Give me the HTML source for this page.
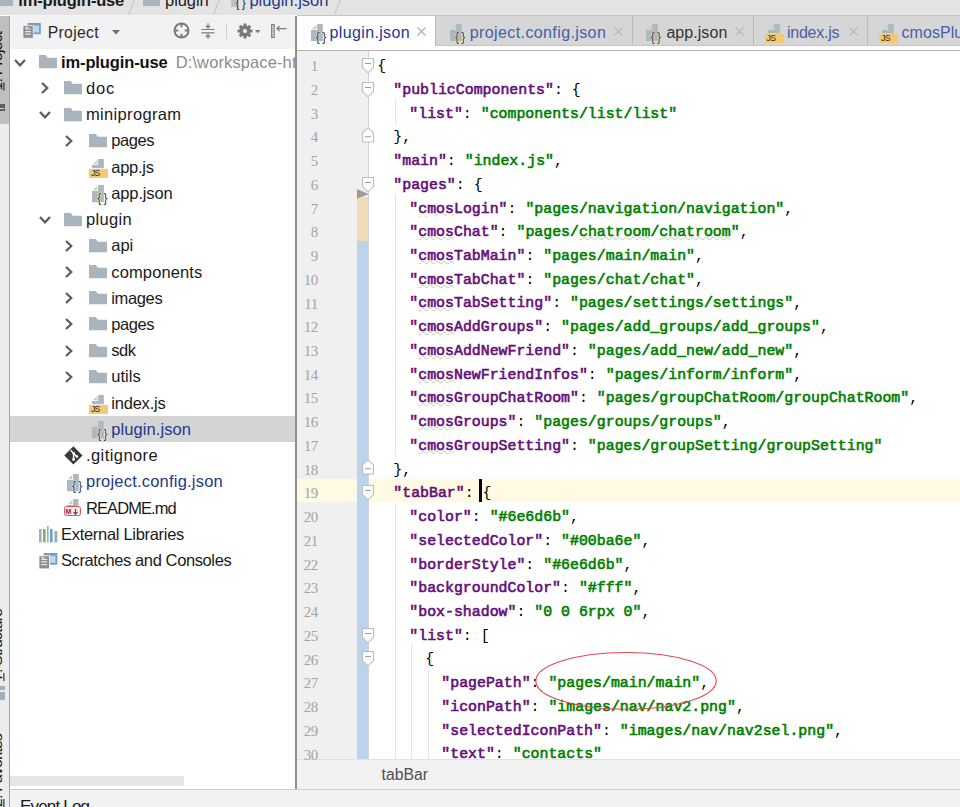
<!DOCTYPE html>
<html lang="en"><head><meta charset="utf-8"><title>plugin.json - im-plugin-use</title>
<style>
html,body{margin:0;padding:0}
body{width:960px;height:807px;overflow:hidden;position:relative;background:#fff;font-family:"Liberation Sans",sans-serif;color:#1a1a1a}
.a{position:absolute}
.t{position:absolute;white-space:pre;line-height:20px;height:20px}
svg{position:absolute;overflow:visible}
.ln{position:absolute;left:297px;width:20.8px;text-align:right;font-family:"Liberation Serif",serif;font-size:15px;color:#a3a3a3;height:24px;line-height:24px;letter-spacing:-0.5px}
.cl{position:absolute;left:377.3px;white-space:pre;font-family:"Liberation Mono",monospace;font-size:14.88px;height:24px;line-height:24px;color:#000}
.k{color:#660e7a;-webkit-text-stroke:0.6px #660e7a}
.s{color:#008000;-webkit-text-stroke:0.6px #008000}
.w{text-decoration:underline wavy #b4d2a5 1px;text-underline-offset:0.3px}
</style></head><body>

<div class="a" style="left:0;top:0;width:960px;height:15px;background:#e3e3e3"></div>
<div class="a" style="left:10px;top:15px;width:285px;height:1px;background:#f4f4f4"></div>
<div class="a" style="left:297px;top:15px;width:663px;height:1px;background:#c6c6c6"></div>
<div class="a" style="left:0;top:16px;width:9px;height:791px;background:#ececec"></div>
<div class="a" style="left:0;top:16px;width:9px;height:108px;background:#bfbfbf"></div>
<div class="a" style="left:9px;top:16px;width:1px;height:791px;background:#a4a4a4"></div>
<div class="a" style="left:10px;top:16px;width:285px;height:32.5px;background:#f2f2f2"></div>
<div class="a" style="left:10px;top:416px;width:285px;height:25.8px;background:#d4d4d4"></div>
<div class="a" style="left:10px;top:776.2px;width:174px;height:10.3px;background:#e6e6e6"></div>
<div class="a" style="left:295px;top:16px;width:2px;height:773px;background:#8f8f8f"></div>
<div class="a" style="left:297px;top:16px;width:663px;height:29.5px;background:#d6d6d6"></div>
<div class="a" style="left:297px;top:16px;width:137.5px;height:34px;background:#fff"></div>
<div class="a" style="left:434.5px;top:16px;width:1px;height:29.5px;background:#b9b9b9"></div>
<div class="a" style="left:632.3px;top:16px;width:1px;height:29.5px;background:#b9b9b9"></div>
<div class="a" style="left:753.2px;top:16px;width:1px;height:29.5px;background:#b9b9b9"></div>
<div class="a" style="left:867px;top:16px;width:1px;height:29.5px;background:#b9b9b9"></div>
<div class="a" style="left:434.5px;top:45px;width:526px;height:1px;background:#c4c4c4"></div>
<div class="a" style="left:297px;top:49.5px;width:663px;height:1px;background:#b4b4b4"></div>
<div class="a" style="left:297px;top:50.5px;width:71.5px;height:708.5px;background:#f0f0f0"></div>
<div class="a" style="left:297px;top:759px;width:663px;height:29.5px;background:#f2f2f2"></div>
<div class="a" style="left:297px;top:759px;width:663px;height:1px;background:#e2e2e2"></div>
<div class="a" style="left:10px;top:788.5px;width:950px;height:18.5px;background:#f2f2f2"></div>
<div class="a" style="left:10px;top:788.5px;width:950px;height:1px;background:#cdcdcd"></div><div class="a" style="left:297px;top:479.2px;width:663px;height:23.3px;background:#fffae3"></div>
<div class="a" style="left:368px;top:50.5px;width:1px;height:708.5px;background:#d4d4d4"></div>
<div class="a" style="left:356.7px;top:196.7px;width:11.8px;height:44.1px;background:#f0dcb4"></div>
<div class="a" style="left:356.7px;top:240.8px;width:11.8px;height:518.2px;background:#bcd3ec"></div>
<svg style="left:356.7px;top:188.5px" width="12" height="10" viewBox="0 0 12 10"><path d="M0 0 L11.8 5.2 L0 9.5Z" fill="#9a9a9a"/></svg>
<div class="a" style="left:395.2px;top:99.5px;width:1px;height:23.7px;background:#e4e4e4"></div>
<div class="a" style="left:395.2px;top:194.4px;width:1px;height:261.1px;background:#e4e4e4"></div>
<div class="a" style="left:395.2px;top:503.0px;width:1px;height:256.0px;background:#e4e4e4"></div>
<div class="a" style="left:411.4px;top:645.4px;width:1px;height:113.6px;background:#e4e4e4"></div>
<div class="a" style="left:427.6px;top:669.1px;width:1px;height:89.9px;background:#e4e4e4"></div>
<div class="ln" style="top:54.20px">1</div>
<div class="cl" style="top:54.10px;padding-left:0px">{</div>
<div class="ln" style="top:77.94px">2</div>
<div class="cl" style="top:77.84px;padding-left:16px"><span class="k">"publicComponents"</span>: {</div>
<div class="ln" style="top:101.67px">3</div>
<div class="cl" style="top:101.57px;padding-left:32px"><span class="k">"list"</span>: <span class="s">"components/list/list"</span></div>
<div class="ln" style="top:125.41px">4</div>
<div class="cl" style="top:125.31px;padding-left:16px">},</div>
<div class="ln" style="top:149.14px">5</div>
<div class="cl" style="top:149.04px;padding-left:16px"><span class="k">"main"</span>: <span class="s">"index.js"</span>,</div>
<div class="ln" style="top:172.88px">6</div>
<div class="cl" style="top:172.78px;padding-left:16px"><span class="k">"pages"</span>: {</div>
<div class="ln" style="top:196.61px">7</div>
<div class="cl" style="top:196.51px;padding-left:32px"><span class="k">"<span class="w">cmos</span>Login"</span>: <span class="s">"pages/navigation/navigation"</span>,</div>
<div class="ln" style="top:220.34px">8</div>
<div class="cl" style="top:220.24px;padding-left:32px"><span class="k">"<span class="w">cmos</span>Chat"</span>: <span class="s">"pages/<span class="w">chatroom</span>/<span class="w">chatroom</span>"</span>,</div>
<div class="ln" style="top:244.08px">9</div>
<div class="cl" style="top:243.98px;padding-left:32px"><span class="k">"<span class="w">cmos</span>TabMain"</span>: <span class="s">"pages/main/main"</span>,</div>
<div class="ln" style="top:267.81px">10</div>
<div class="cl" style="top:267.72px;padding-left:32px"><span class="k">"<span class="w">cmos</span>TabChat"</span>: <span class="s">"pages/chat/chat"</span>,</div>
<div class="ln" style="top:291.55px">11</div>
<div class="cl" style="top:291.45px;padding-left:32px"><span class="k">"<span class="w">cmos</span>TabSetting"</span>: <span class="s">"pages/settings/settings"</span>,</div>
<div class="ln" style="top:315.28px">12</div>
<div class="cl" style="top:315.19px;padding-left:32px"><span class="k">"<span class="w">cmos</span>AddGroups"</span>: <span class="s">"pages/add_groups/add_groups"</span>,</div>
<div class="ln" style="top:339.02px">13</div>
<div class="cl" style="top:338.92px;padding-left:32px"><span class="k">"<span class="w">cmos</span>AddNewFriend"</span>: <span class="s">"pages/add_new/add_new"</span>,</div>
<div class="ln" style="top:362.75px">14</div>
<div class="cl" style="top:362.66px;padding-left:32px"><span class="k">"<span class="w">cmos</span>NewFriendInfos"</span>: <span class="s">"pages/inform/inform"</span>,</div>
<div class="ln" style="top:386.49px">15</div>
<div class="cl" style="top:386.39px;padding-left:32px"><span class="k">"<span class="w">cmos</span>GroupChatRoom"</span>: <span class="s">"pages/groupChatRoom/groupChatRoom"</span>,</div>
<div class="ln" style="top:410.22px">16</div>
<div class="cl" style="top:410.12px;padding-left:32px"><span class="k">"<span class="w">cmos</span>Groups"</span>: <span class="s">"pages/groups/groups"</span>,</div>
<div class="ln" style="top:433.96px">17</div>
<div class="cl" style="top:433.86px;padding-left:32px"><span class="k">"<span class="w">cmos</span>GroupSetting"</span>: <span class="s">"pages/groupSetting/groupSetting"</span></div>
<div class="ln" style="top:457.69px">18</div>
<div class="cl" style="top:457.60px;padding-left:16px">},</div>
<div class="ln" style="top:481.43px">19</div>
<div class="cl" style="top:481.33px;padding-left:16px"><span class="k">"tabBar"</span>: {</div>
<div class="ln" style="top:505.16px">20</div>
<div class="cl" style="top:505.06px;padding-left:32px"><span class="k">"color"</span>: <span class="s">"#6e6d6b"</span>,</div>
<div class="ln" style="top:528.90px">21</div>
<div class="cl" style="top:528.80px;padding-left:32px"><span class="k">"selectedColor"</span>: <span class="s">"#00ba6e"</span>,</div>
<div class="ln" style="top:552.63px">22</div>
<div class="cl" style="top:552.53px;padding-left:32px"><span class="k">"borderStyle"</span>: <span class="s">"#6e6d6b"</span>,</div>
<div class="ln" style="top:576.37px">23</div>
<div class="cl" style="top:576.27px;padding-left:32px"><span class="k">"backgroundColor"</span>: <span class="s">"#fff"</span>,</div>
<div class="ln" style="top:600.11px">24</div>
<div class="cl" style="top:600.00px;padding-left:32px"><span class="k">"box-shadow"</span>: <span class="s">"0 0 6rpx 0"</span>,</div>
<div class="ln" style="top:623.84px">25</div>
<div class="cl" style="top:623.74px;padding-left:32px"><span class="k">"list"</span>: [</div>
<div class="ln" style="top:647.58px">26</div>
<div class="cl" style="top:647.48px;padding-left:48px">{</div>
<div class="ln" style="top:671.31px">27</div>
<div class="cl" style="top:671.21px;padding-left:64px"><span class="k">"pagePath"</span>: <span class="s">"pages/main/main"</span>,</div>
<div class="ln" style="top:695.05px">28</div>
<div class="cl" style="top:694.95px;padding-left:64px"><span class="k">"iconPath"</span>: <span class="s">"images/nav/nav2.png"</span>,</div>
<div class="ln" style="top:718.78px">29</div>
<div class="cl" style="top:718.68px;padding-left:64px"><span class="k">"selectedIconPath"</span>: <span class="s">"images/nav/nav2sel.png"</span>,</div>
<div class="ln" style="top:742.51px">30</div>
<div class="cl" style="top:742.41px;padding-left:64px"><span class="k">"text"</span>: <span class="s">"contacts"</span></div>
<div class="a" style="left:479.3px;top:479.2px;width:2.6px;height:22.6px;background:#000"></div>
<svg style="left:362.2px;top:57.9px" width="12" height="16" viewBox="0 0 11 16" preserveAspectRatio="none"><path d="M0.5 0.5 H10.5 V9.5 L5.5 14.8 L0.5 9.5Z" fill="#fff" stroke="#bdbdbd" stroke-width="1"/><path d="M2.8 5.5 H8.2" stroke="#9a9a9a" stroke-width="1"/></svg>
<svg style="left:362.2px;top:81.6px" width="12" height="16" viewBox="0 0 11 16" preserveAspectRatio="none"><path d="M0.5 0.5 H10.5 V9.5 L5.5 14.8 L0.5 9.5Z" fill="#fff" stroke="#bdbdbd" stroke-width="1"/><path d="M2.8 5.5 H8.2" stroke="#9a9a9a" stroke-width="1"/></svg>
<svg style="left:362.2px;top:176.6px" width="12" height="16" viewBox="0 0 11 16" preserveAspectRatio="none"><path d="M0.5 0.5 H10.5 V9.5 L5.5 14.8 L0.5 9.5Z" fill="#fff" stroke="#bdbdbd" stroke-width="1"/><path d="M2.8 5.5 H8.2" stroke="#9a9a9a" stroke-width="1"/></svg>
<svg style="left:362.2px;top:485.1px" width="12" height="16" viewBox="0 0 11 16" preserveAspectRatio="none"><path d="M0.5 0.5 H10.5 V9.5 L5.5 14.8 L0.5 9.5Z" fill="#fff" stroke="#bdbdbd" stroke-width="1"/><path d="M2.8 5.5 H8.2" stroke="#9a9a9a" stroke-width="1"/></svg>
<svg style="left:362.2px;top:627.5px" width="12" height="16" viewBox="0 0 11 16" preserveAspectRatio="none"><path d="M0.5 0.5 H10.5 V9.5 L5.5 14.8 L0.5 9.5Z" fill="#fff" stroke="#bdbdbd" stroke-width="1"/><path d="M2.8 5.5 H8.2" stroke="#9a9a9a" stroke-width="1"/></svg>
<svg style="left:362.2px;top:651.3px" width="12" height="16" viewBox="0 0 11 16" preserveAspectRatio="none"><path d="M0.5 0.5 H10.5 V9.5 L5.5 14.8 L0.5 9.5Z" fill="#fff" stroke="#bdbdbd" stroke-width="1"/><path d="M2.8 5.5 H8.2" stroke="#9a9a9a" stroke-width="1"/></svg>
<svg style="left:362.2px;top:126.7px" width="12" height="16" viewBox="0 0 11 16" preserveAspectRatio="none"><path d="M0.5 15 H10.5 V6 L5.5 0.7 L0.5 6Z" fill="#fff" stroke="#bdbdbd" stroke-width="1"/><path d="M2.8 9.8 H8.2" stroke="#9a9a9a" stroke-width="1"/></svg>
<svg style="left:362.2px;top:459.0px" width="12" height="16" viewBox="0 0 11 16" preserveAspectRatio="none"><path d="M0.5 15 H10.5 V6 L5.5 0.7 L0.5 6Z" fill="#fff" stroke="#bdbdbd" stroke-width="1"/><path d="M2.8 9.8 H8.2" stroke="#9a9a9a" stroke-width="1"/></svg>
<svg style="left:0;top:0" width="960" height="807" viewBox="0 0 960 807"><ellipse cx="626" cy="680.9" rx="90.2" ry="28.4" fill="none" stroke="#e2474c" stroke-width="1.1"/></svg><svg style="left:13.6px;top:58.8px" width="12" height="8" viewBox="0 0 12 8"><path d="M1 1 L6 6.3 L11 1" fill="none" stroke="#5c5c5c" stroke-width="2.2"/></svg>
<svg style="left:38.8px;top:55.1px" width="18.0" height="13.2" viewBox="0 0 18 13.2"><path d="M0 0 H6.8 L8.8 2.7 H18 V13.2 H0Z" fill="#aab4bc"/></svg>
<svg style="left:40.5px;top:82.2px" width="8" height="12" viewBox="0 0 8 12"><path d="M1 1 L6.3 6 L1 11" fill="none" stroke="#5c5c5c" stroke-width="2.2"/></svg>
<svg style="left:63.6px;top:81.3px" width="18.0" height="13.2" viewBox="0 0 18 13.2"><path d="M0 0 H6.8 L8.8 2.7 H18 V13.2 H0Z" fill="#aab4bc"/></svg>
<svg style="left:39.2px;top:111.3px" width="12" height="8" viewBox="0 0 12 8"><path d="M1 1 L6 6.3 L11 1" fill="none" stroke="#5c5c5c" stroke-width="2.2"/></svg>
<svg style="left:63.6px;top:107.6px" width="18.0" height="13.2" viewBox="0 0 18 13.2"><path d="M0 0 H6.8 L8.8 2.7 H18 V13.2 H0Z" fill="#aab4bc"/></svg>
<svg style="left:64.9px;top:134.7px" width="8" height="12" viewBox="0 0 8 12"><path d="M1 1 L6.3 6 L1 11" fill="none" stroke="#5c5c5c" stroke-width="2.2"/></svg>
<svg style="left:88.9px;top:133.8px" width="18.0" height="13.2" viewBox="0 0 18 13.2"><path d="M0 0 H6.8 L8.8 2.7 H18 V13.2 H0Z" fill="#aab4bc"/></svg>
<svg style="left:91.9px;top:158.6px" width="11.9" height="9.2" viewBox="0 0 11.9 9.2"><path d="M6.1 0 H11.9 V9.2 H0 V6.1 H6.1 Z" fill="#aeb8bf"/><path d="M5.3 0.7 V5.3 H0.7Z" fill="#c9d0d5"/></svg>
<div class="a" style="left:88.9px;top:168.8px;width:19.2px;height:8.9px;background:#f5c878"></div>
<div class="t" style="left:90.9px;top:168.5px;font-size:8.8px;color:#3d2e0e;line-height:9px;height:9px;letter-spacing:-0.7px;transform:scaleY(1.12);transform-origin:0 100%">JS</div>
<svg style="left:92.0px;top:185.2px" width="11.9" height="17.3" viewBox="0 0 11.9 17.3"><path d="M6.1 0 H11.9 V17.3 H0 V6.1 H6.1 Z" fill="#aeb8bf"/><path d="M5.3 0.7 V5.3 H0.7Z" fill="#c9d0d5"/></svg>
<div class="t" style="left:97.2px;top:191.6px;font-size:12px;color:#2f3336;line-height:12px;height:12px;letter-spacing:2.4px;text-shadow:0 0 1px #fff,0 0 1px #fff,0 0 2px #fff">{}</div>
<svg style="left:39.2px;top:216.2px" width="12" height="8" viewBox="0 0 12 8"><path d="M1 1 L6 6.3 L11 1" fill="none" stroke="#5c5c5c" stroke-width="2.2"/></svg>
<svg style="left:63.6px;top:212.5px" width="18.0" height="13.2" viewBox="0 0 18 13.2"><path d="M0 0 H6.8 L8.8 2.7 H18 V13.2 H0Z" fill="#aab4bc"/></svg>
<svg style="left:64.9px;top:239.6px" width="8" height="12" viewBox="0 0 8 12"><path d="M1 1 L6.3 6 L1 11" fill="none" stroke="#5c5c5c" stroke-width="2.2"/></svg>
<svg style="left:88.9px;top:238.7px" width="18.0" height="13.2" viewBox="0 0 18 13.2"><path d="M0 0 H6.8 L8.8 2.7 H18 V13.2 H0Z" fill="#aab4bc"/></svg>
<svg style="left:64.9px;top:265.8px" width="8" height="12" viewBox="0 0 8 12"><path d="M1 1 L6.3 6 L1 11" fill="none" stroke="#5c5c5c" stroke-width="2.2"/></svg>
<svg style="left:88.9px;top:264.9px" width="18.0" height="13.2" viewBox="0 0 18 13.2"><path d="M0 0 H6.8 L8.8 2.7 H18 V13.2 H0Z" fill="#aab4bc"/></svg>
<svg style="left:64.9px;top:292.1px" width="8" height="12" viewBox="0 0 8 12"><path d="M1 1 L6.3 6 L1 11" fill="none" stroke="#5c5c5c" stroke-width="2.2"/></svg>
<svg style="left:88.9px;top:291.2px" width="18.0" height="13.2" viewBox="0 0 18 13.2"><path d="M0 0 H6.8 L8.8 2.7 H18 V13.2 H0Z" fill="#aab4bc"/></svg>
<svg style="left:64.9px;top:318.3px" width="8" height="12" viewBox="0 0 8 12"><path d="M1 1 L6.3 6 L1 11" fill="none" stroke="#5c5c5c" stroke-width="2.2"/></svg>
<svg style="left:88.9px;top:317.4px" width="18.0" height="13.2" viewBox="0 0 18 13.2"><path d="M0 0 H6.8 L8.8 2.7 H18 V13.2 H0Z" fill="#aab4bc"/></svg>
<svg style="left:64.9px;top:344.5px" width="8" height="12" viewBox="0 0 8 12"><path d="M1 1 L6.3 6 L1 11" fill="none" stroke="#5c5c5c" stroke-width="2.2"/></svg>
<svg style="left:88.9px;top:343.6px" width="18.0" height="13.2" viewBox="0 0 18 13.2"><path d="M0 0 H6.8 L8.8 2.7 H18 V13.2 H0Z" fill="#aab4bc"/></svg>
<svg style="left:64.9px;top:370.8px" width="8" height="12" viewBox="0 0 8 12"><path d="M1 1 L6.3 6 L1 11" fill="none" stroke="#5c5c5c" stroke-width="2.2"/></svg>
<svg style="left:88.9px;top:369.9px" width="18.0" height="13.2" viewBox="0 0 18 13.2"><path d="M0 0 H6.8 L8.8 2.7 H18 V13.2 H0Z" fill="#aab4bc"/></svg>
<svg style="left:91.9px;top:394.7px" width="11.9" height="9.2" viewBox="0 0 11.9 9.2"><path d="M6.1 0 H11.9 V9.2 H0 V6.1 H6.1 Z" fill="#aeb8bf"/><path d="M5.3 0.7 V5.3 H0.7Z" fill="#c9d0d5"/></svg>
<div class="a" style="left:88.9px;top:404.9px;width:19.2px;height:8.9px;background:#f5c878"></div>
<div class="t" style="left:90.9px;top:404.6px;font-size:8.8px;color:#3d2e0e;line-height:9px;height:9px;letter-spacing:-0.7px;transform:scaleY(1.12);transform-origin:0 100%">JS</div>
<svg style="left:92.0px;top:421.2px" width="11.9" height="17.3" viewBox="0 0 11.9 17.3"><path d="M6.1 0 H11.9 V17.3 H0 V6.1 H6.1 Z" fill="#aeb8bf"/><path d="M5.3 0.7 V5.3 H0.7Z" fill="#c9d0d5"/></svg>
<div class="t" style="left:97.2px;top:427.6px;font-size:12px;color:#2f3336;line-height:12px;height:12px;letter-spacing:2.4px;text-shadow:0 0 1px #fff,0 0 1px #fff,0 0 2px #fff">{}</div>
<svg style="left:63.8px;top:446.1px" width="18.8" height="18.8" viewBox="0 0 20 20"><path d="M10 0.3 L19.7 10 L10 19.7 L0.3 10Z" fill="#3a3a3a"/><path d="M7 4.5 L10.2 7.7 M10.2 7.7 V14.5 M10.4 8 L13.6 11.2" stroke="#fff" stroke-width="1.5" fill="none"/><circle cx="10.2" cy="7.8" r="1.5" fill="#fff"/><circle cx="10.2" cy="14.4" r="1.5" fill="#fff"/><circle cx="13.7" cy="11.3" r="1.5" fill="#fff"/></svg>
<svg style="left:66.7px;top:473.7px" width="11.9" height="17.3" viewBox="0 0 11.9 17.3"><path d="M6.1 0 H11.9 V17.3 H0 V6.1 H6.1 Z" fill="#aeb8bf"/><path d="M5.3 0.7 V5.3 H0.7Z" fill="#c9d0d5"/></svg>
<div class="t" style="left:71.9px;top:480.1px;font-size:12px;color:#2f3336;line-height:12px;height:12px;letter-spacing:2.4px;text-shadow:0 0 1px #fff,0 0 1px #fff,0 0 2px #fff">{}</div>
<svg style="left:66.5px;top:498.9px" width="11.5" height="14.0" viewBox="0 0 11.5 14.0"><path d="M6.1 0 H11.5 V14.0 H0 V6.1 H6.1 Z" fill="#aeb8bf"/><path d="M5.3 0.7 V5.3 H0.7Z" fill="#c9d0d5"/></svg>
<div class="a" style="left:63.9px;top:506.3px;width:15px;height:8px;border:1.2px solid #e0525e;border-radius:2.5px;background:#fbe9ea"></div>
<div class="t" style="left:65.6px;top:507.3px;font-size:7px;font-weight:bold;color:#8a2730;line-height:9px;height:9px;letter-spacing:-0.3px">M</div>
<svg style="left:72.8px;top:508.8px" width="5" height="6" viewBox="0 0 5 6"><path d="M2.5 0 V5 M0.5 3 L2.5 5.2 L4.5 3" stroke="#8a2730" stroke-width="1.1" fill="none"/></svg>
<svg style="left:38.8px;top:526.3px" width="18.5" height="16.4" viewBox="0 0 18.5 16.4"><rect x="0" y="3" width="2.6" height="13.4" fill="#a3adb5"/><rect x="4" y="3" width="2.6" height="13.4" fill="#7fb069"/><rect x="8" y="0" width="1.6" height="16.4" fill="#a3adb5"/><rect x="11" y="3" width="2.6" height="13.4" fill="#6a9fd4"/><rect x="15.4" y="5" width="3" height="11.4" fill="#a3adb5"/></svg>
<svg style="left:38.8px;top:552.8px" width="18.3" height="15.9" viewBox="0 0 17.8 15.2" preserveAspectRatio="none"><rect x="4.6" y="0" width="13.2" height="11.2" fill="#6f9fc3"/><rect x="6.3" y="2.6" width="9.8" height="6.9" fill="#bcd6ea"/><rect x="0" y="2.7" width="10.2" height="12.5" fill="#8c8c8c" stroke="#fff" stroke-width="0.8"/><path d="M2.2 6 H8 M2.2 8.6 H8 M2.2 11.2 H8" stroke="#e8e8e8" stroke-width="1.2"/><rect x="2.2" y="4" width="3" height="1.2" fill="#e8e8e8"/></svg>
<svg style="left:23px;top:23.4px" width="17.8" height="15.2" viewBox="0 0 17.8 15.2"><rect x="4.6" y="0" width="13.2" height="11.2" fill="#6f9fc3"/><rect x="6.3" y="2.6" width="9.8" height="6.9" fill="#bcd6ea"/><rect x="0" y="2.7" width="10.2" height="12.5" fill="#8c8c8c" stroke="#f2f2f2" stroke-width="0.8"/><path d="M2.2 6 H8 M2.2 8.6 H8 M2.2 11.2 H8" stroke="#e8e8e8" stroke-width="1.2"/><rect x="2.2" y="4" width="3" height="1.2" fill="#e8e8e8"/></svg>
<svg style="left:111.5px;top:30.3px" width="8" height="5" viewBox="0 0 8 5"><path d="M0 0 H8 L4 4.6Z" fill="#6e6e6e"/></svg>
<svg style="left:172.5px;top:21.8px" width="17" height="17" viewBox="0 0 17 17"><circle cx="8.5" cy="8.5" r="7" fill="none" stroke="#7a7a7a" stroke-width="2"/><path d="M8.5 1.5 V5.3 M8.5 11.7 V15.5 M1.5 8.5 H5.3 M11.7 8.5 H15.5" stroke="#7a7a7a" stroke-width="2"/></svg>
<svg style="left:200.5px;top:22.5px" width="14" height="16" viewBox="0 0 14 16"><path d="M0.4 6.5 H13.4 M0.4 9.9 H13.4" stroke="#7a7a7a" stroke-width="1.1"/><path d="M7 0.3 V4.6 M4.8 2.6 L7 4.8 L9.2 2.6 M7 16 V11.8 M4.8 13.8 L7 11.6 L9.2 13.8" stroke="#7a7a7a" stroke-width="1.2" fill="none"/></svg>
<div class="a" style="left:226.2px;top:23.5px;width:1px;height:15.5px;background:#cdcdcd"></div>
<svg style="left:236.5px;top:23px" width="16" height="16" viewBox="0 0 16 16"><path d="M13.19 6.51 L15.45 6.49 L15.45 9.51 L13.19 9.49 L12.72 10.61 L14.33 12.20 L12.20 14.33 L10.61 12.72 L9.49 13.19 L9.51 15.45 L6.49 15.45 L6.51 13.19 L5.39 12.72 L3.80 14.33 L1.67 12.20 L3.28 10.61 L2.81 9.49 L0.55 9.51 L0.55 6.49 L2.81 6.51 L3.28 5.39 L1.67 3.80 L3.80 1.67 L5.39 3.28 L6.51 2.81 L6.49 0.55 L9.51 0.55 L9.49 2.81 L10.61 3.28 L12.20 1.67 L14.33 3.80 L12.72 5.39Z" fill="#7a7a7a"/><circle cx="8" cy="8" r="5.6" fill="#7a7a7a"/><circle cx="8" cy="8" r="2.1" fill="#f2f2f2"/></svg>
<svg style="left:255.3px;top:30.3px" width="5.4" height="3.4" viewBox="0 0 5.4 3.4"><path d="M0 0 H5.4 L2.7 3.2Z" fill="#7a7a7a"/></svg>
<svg style="left:271px;top:24px" width="16" height="14" viewBox="0 0 16 14"><rect x="0.6" y="0.5" width="2.6" height="13" fill="#c9c9c9" stroke="#7a7a7a" stroke-width="1"/><path d="M6 4.6 H15.5 M8.6 2 L6 4.6 L8.6 7.2" stroke="#7a7a7a" stroke-width="1.2" fill="none"/></svg>
<div class="a" style="left:0;top:0;width:12.5px;height:5.5px;background:#aab4bc"></div>
<div class="a" style="left:142.5px;top:0;width:17.5px;height:5.5px;background:#aab4bc"></div>
<svg style="left:127.5px;top:0" width="7" height="15" viewBox="0 0 7 15"><path d="M6.2 0 L0.5 14.5" stroke="#c2c2c2" stroke-width="1"/></svg>
<svg style="left:213.0px;top:0" width="7" height="15" viewBox="0 0 7 15"><path d="M6.2 0 L0.5 14.5" stroke="#c2c2c2" stroke-width="1"/></svg>
<svg style="left:333.5px;top:0" width="7" height="15" viewBox="0 0 7 15"><path d="M6.2 0 L0.5 14.5" stroke="#c2c2c2" stroke-width="1"/></svg>
<div class="a" style="left:230.5px;top:0;width:8.5px;height:7px;background:#b8c1c8"></div>
<div class="t" style="left:235.4px;top:-3.2px;font-size:12px;color:#2f3336;line-height:12px;height:12px;letter-spacing:2.4px;text-shadow:0 0 1px #e3e3e3,0 0 1px #e3e3e3">{}</div>
<svg style="left:311.2px;top:24.0px" width="11.8" height="17.0" viewBox="0 0 11.8 17.0"><path d="M6.1 0 H11.8 V17.0 H0 V6.1 H6.1 Z" fill="#aeb8bf"/><path d="M5.3 0.7 V5.3 H0.7Z" fill="#c9d0d5"/></svg>
<div class="t" style="left:315.8px;top:30.6px;font-size:12px;color:#2f3336;line-height:12px;height:12px;letter-spacing:2.4px;text-shadow:0 0 1px #fff,0 0 1px #fff">{}</div>
<svg style="left:450.3px;top:24.0px" width="11.8" height="17.0" viewBox="0 0 11.8 17.0"><path d="M6.1 0 H11.8 V17.0 H0 V6.1 H6.1 Z" fill="#aeb8bf"/><path d="M5.3 0.7 V5.3 H0.7Z" fill="#c9d0d5"/></svg>
<div class="t" style="left:454.9px;top:30.6px;font-size:12px;color:#2f3336;line-height:12px;height:12px;letter-spacing:2.4px;text-shadow:0 0 1px #fff,0 0 1px #fff">{}</div>
<svg style="left:646.1px;top:24.0px" width="11.8" height="17.0" viewBox="0 0 11.8 17.0"><path d="M6.1 0 H11.8 V17.0 H0 V6.1 H6.1 Z" fill="#aeb8bf"/><path d="M5.3 0.7 V5.3 H0.7Z" fill="#c9d0d5"/></svg>
<div class="t" style="left:650.7px;top:30.6px;font-size:12px;color:#2f3336;line-height:12px;height:12px;letter-spacing:2.4px;text-shadow:0 0 1px #fff,0 0 1px #fff">{}</div>
<svg style="left:767.5px;top:24.1px" width="11.9" height="9.2" viewBox="0 0 11.9 9.2"><path d="M6.1 0 H11.9 V9.2 H0 V6.1 H6.1 Z" fill="#aeb8bf"/><path d="M5.3 0.7 V5.3 H0.7Z" fill="#c9d0d5"/></svg>
<div class="a" style="left:764.5px;top:34.3px;width:19.2px;height:8.9px;background:#f5c878"></div>
<div class="t" style="left:766.5px;top:34.0px;font-size:8.8px;color:#3d2e0e;line-height:9px;height:9px;letter-spacing:-0.7px;transform:scaleY(1.12);transform-origin:0 100%">JS</div>
<svg style="left:882.0px;top:24.1px" width="11.9" height="9.2" viewBox="0 0 11.9 9.2"><path d="M6.1 0 H11.9 V9.2 H0 V6.1 H6.1 Z" fill="#aeb8bf"/><path d="M5.3 0.7 V5.3 H0.7Z" fill="#c9d0d5"/></svg>
<div class="a" style="left:879.0px;top:34.3px;width:19.2px;height:8.9px;background:#f5c878"></div>
<div class="t" style="left:881.0px;top:34.0px;font-size:8.8px;color:#3d2e0e;line-height:9px;height:9px;letter-spacing:-0.7px;transform:scaleY(1.12);transform-origin:0 100%">JS</div>
<svg style="left:416.9px;top:27.1px" width="9" height="9" viewBox="0 0 9 9"><path d="M0.5 0.5 L8.5 8.5 M8.5 0.5 L0.5 8.5" stroke="#b0b0b0" stroke-width="1.2"/></svg>
<svg style="left:613.5px;top:27.1px" width="9" height="9" viewBox="0 0 9 9"><path d="M0.5 0.5 L8.5 8.5 M8.5 0.5 L0.5 8.5" stroke="#b8b8b8" stroke-width="1.2"/></svg>
<svg style="left:734.5px;top:27.1px" width="9" height="9" viewBox="0 0 9 9"><path d="M0.5 0.5 L8.5 8.5 M8.5 0.5 L0.5 8.5" stroke="#b8b8b8" stroke-width="1.2"/></svg>
<svg style="left:848.5px;top:27.1px" width="9" height="9" viewBox="0 0 9 9"><path d="M0.5 0.5 L8.5 8.5 M8.5 0.5 L0.5 8.5" stroke="#b8b8b8" stroke-width="1.2"/></svg>
<div class="t" style="left:0;top:0;transform-origin:0 0;transform:translate(-12.6px,90.5px) rotate(-90deg);font-size:15.5px;letter-spacing:-0.65px;color:#111;text-underline-offset:1px"><u>1</u>: Project</div>
<div class="a" style="left:0;top:104px;width:5px;height:7px;background:#5f5f5f"></div>
<div class="a" style="left:0;top:107.6px;width:4px;height:1.4px;background:#d0d0d0"></div>
<div class="t" style="left:0;top:0;transform-origin:0 0;transform:translate(-12.6px,681.0px) rotate(-90deg);font-size:15.5px;letter-spacing:-0.65px;color:#111;text-underline-offset:1px"><u>7</u>: Structure</div>
<div class="a" style="left:0;top:685.5px;width:5px;height:14.5px;background:#9fb0c2"></div>
<div class="a" style="left:0;top:690px;width:5px;height:2px;background:#ececec"></div>
<div class="t" style="left:0;top:0;transform-origin:0 0;transform:translate(-12.6px,807.0px) rotate(-90deg);font-size:15.5px;letter-spacing:-0.65px;color:#111;text-underline-offset:1px"><u>2</u>: Favorites</div>
<div class="t" style="left:18.3px;top:-9.82px;font-size:16.5px;letter-spacing:-0.181px;color:#1a1a1a;font-weight:bold;">im-plugin-use</div>
<div class="t" style="left:165.0px;top:-9.82px;font-size:16.5px;letter-spacing:-0.049px;color:#1a1a1a;">plugin</div>
<div class="t" style="left:249.4px;top:-9.82px;font-size:16.5px;letter-spacing:0.021px;color:#22388f;">plugin.json</div>
<div class="t" style="left:47.7px;top:22.73px;font-size:15.8px;letter-spacing:0.305px;color:#2b2b2b;">Project</div>
<div class="t" style="left:61.0px;top:51.68px;font-size:16.5px;letter-spacing:-0.123px;color:#111;font-weight:bold;">im-plugin-use</div>
<div class="t" style="left:86.0px;top:77.91px;font-size:16.5px;letter-spacing:0.845px;color:#1a1a1a;">doc</div>
<div class="t" style="left:86.0px;top:104.14px;font-size:16.5px;letter-spacing:0.330px;color:#1a1a1a;">miniprogram</div>
<div class="t" style="left:111.3px;top:130.37px;font-size:16.5px;letter-spacing:-0.417px;color:#1a1a1a;">pages</div>
<div class="t" style="left:111.3px;top:156.60px;font-size:16.5px;letter-spacing:-0.266px;color:#1a1a1a;">app.js</div>
<div class="t" style="left:111.3px;top:182.83px;font-size:16.5px;letter-spacing:-0.142px;color:#1a1a1a;">app.json</div>
<div class="t" style="left:86.0px;top:209.06px;font-size:16.5px;letter-spacing:0.331px;color:#1a1a1a;">plugin</div>
<div class="t" style="left:111.3px;top:235.29px;font-size:16.5px;letter-spacing:-0.016px;color:#1a1a1a;">api</div>
<div class="t" style="left:111.3px;top:261.52px;font-size:16.5px;letter-spacing:0.123px;color:#1a1a1a;">components</div>
<div class="t" style="left:111.3px;top:287.75px;font-size:16.5px;letter-spacing:-0.361px;color:#1a1a1a;">images</div>
<div class="t" style="left:111.3px;top:313.98px;font-size:16.5px;letter-spacing:-0.417px;color:#1a1a1a;">pages</div>
<div class="t" style="left:111.3px;top:340.21px;font-size:16.5px;letter-spacing:-0.494px;color:#1a1a1a;">sdk</div>
<div class="t" style="left:111.3px;top:366.44px;font-size:16.5px;letter-spacing:0.014px;color:#1a1a1a;">utils</div>
<div class="t" style="left:111.3px;top:392.67px;font-size:16.5px;letter-spacing:-0.222px;color:#1a1a1a;">index.js</div>
<div class="t" style="left:111.3px;top:418.90px;font-size:16.5px;letter-spacing:0.081px;color:#22388f;">plugin.json</div>
<div class="t" style="left:86.0px;top:445.13px;font-size:16.5px;letter-spacing:0.423px;color:#1a1a1a;">.gitignore</div>
<div class="t" style="left:86.0px;top:471.36px;font-size:16.5px;letter-spacing:0.206px;color:#22388f;">project.config.json</div>
<div class="t" style="left:86.0px;top:497.59px;font-size:16.5px;letter-spacing:-0.926px;color:#1a1a1a;">README.md</div>
<div class="t" style="left:61.0px;top:523.82px;font-size:16.5px;letter-spacing:-0.299px;color:#1a1a1a;">External Libraries</div>
<div class="t" style="left:61.0px;top:550.05px;font-size:16.5px;letter-spacing:-0.389px;color:#1a1a1a;">Scratches and Consoles</div>
<div class="t" style="left:175.7px;top:51.68px;font-size:16.5px;letter-spacing:0.113px;color:#8c8c8c;width:119.3px;overflow:hidden;">D:\workspace-ht</div>
<div class="t" style="left:329.6px;top:22.76px;font-size:16px;letter-spacing:0.350px;color:#22388f;">plugin.json</div>
<div class="t" style="left:469.8px;top:22.76px;font-size:16px;letter-spacing:0.391px;color:#4560ad;">project.config.json</div>
<div class="t" style="left:666.4px;top:22.76px;font-size:16px;letter-spacing:0.057px;color:#333;">app.json</div>
<div class="t" style="left:787.0px;top:22.76px;font-size:16px;letter-spacing:-0.250px;color:#4560ad;">index.js</div>
<div class="t" style="left:901.5px;top:22.76px;font-size:16px;letter-spacing:0.066px;color:#4560ad;">cmosPlugin.js</div>
<div class="t" style="left:381.6px;top:764.73px;font-size:15.8px;letter-spacing:-0.029px;color:#505050;">tabBar</div>
<div class="t" style="left:20.0px;top:796.61px;font-size:17px;letter-spacing:-0.820px;color:#1a1a1a;">Event Log</div>
</body></html>
